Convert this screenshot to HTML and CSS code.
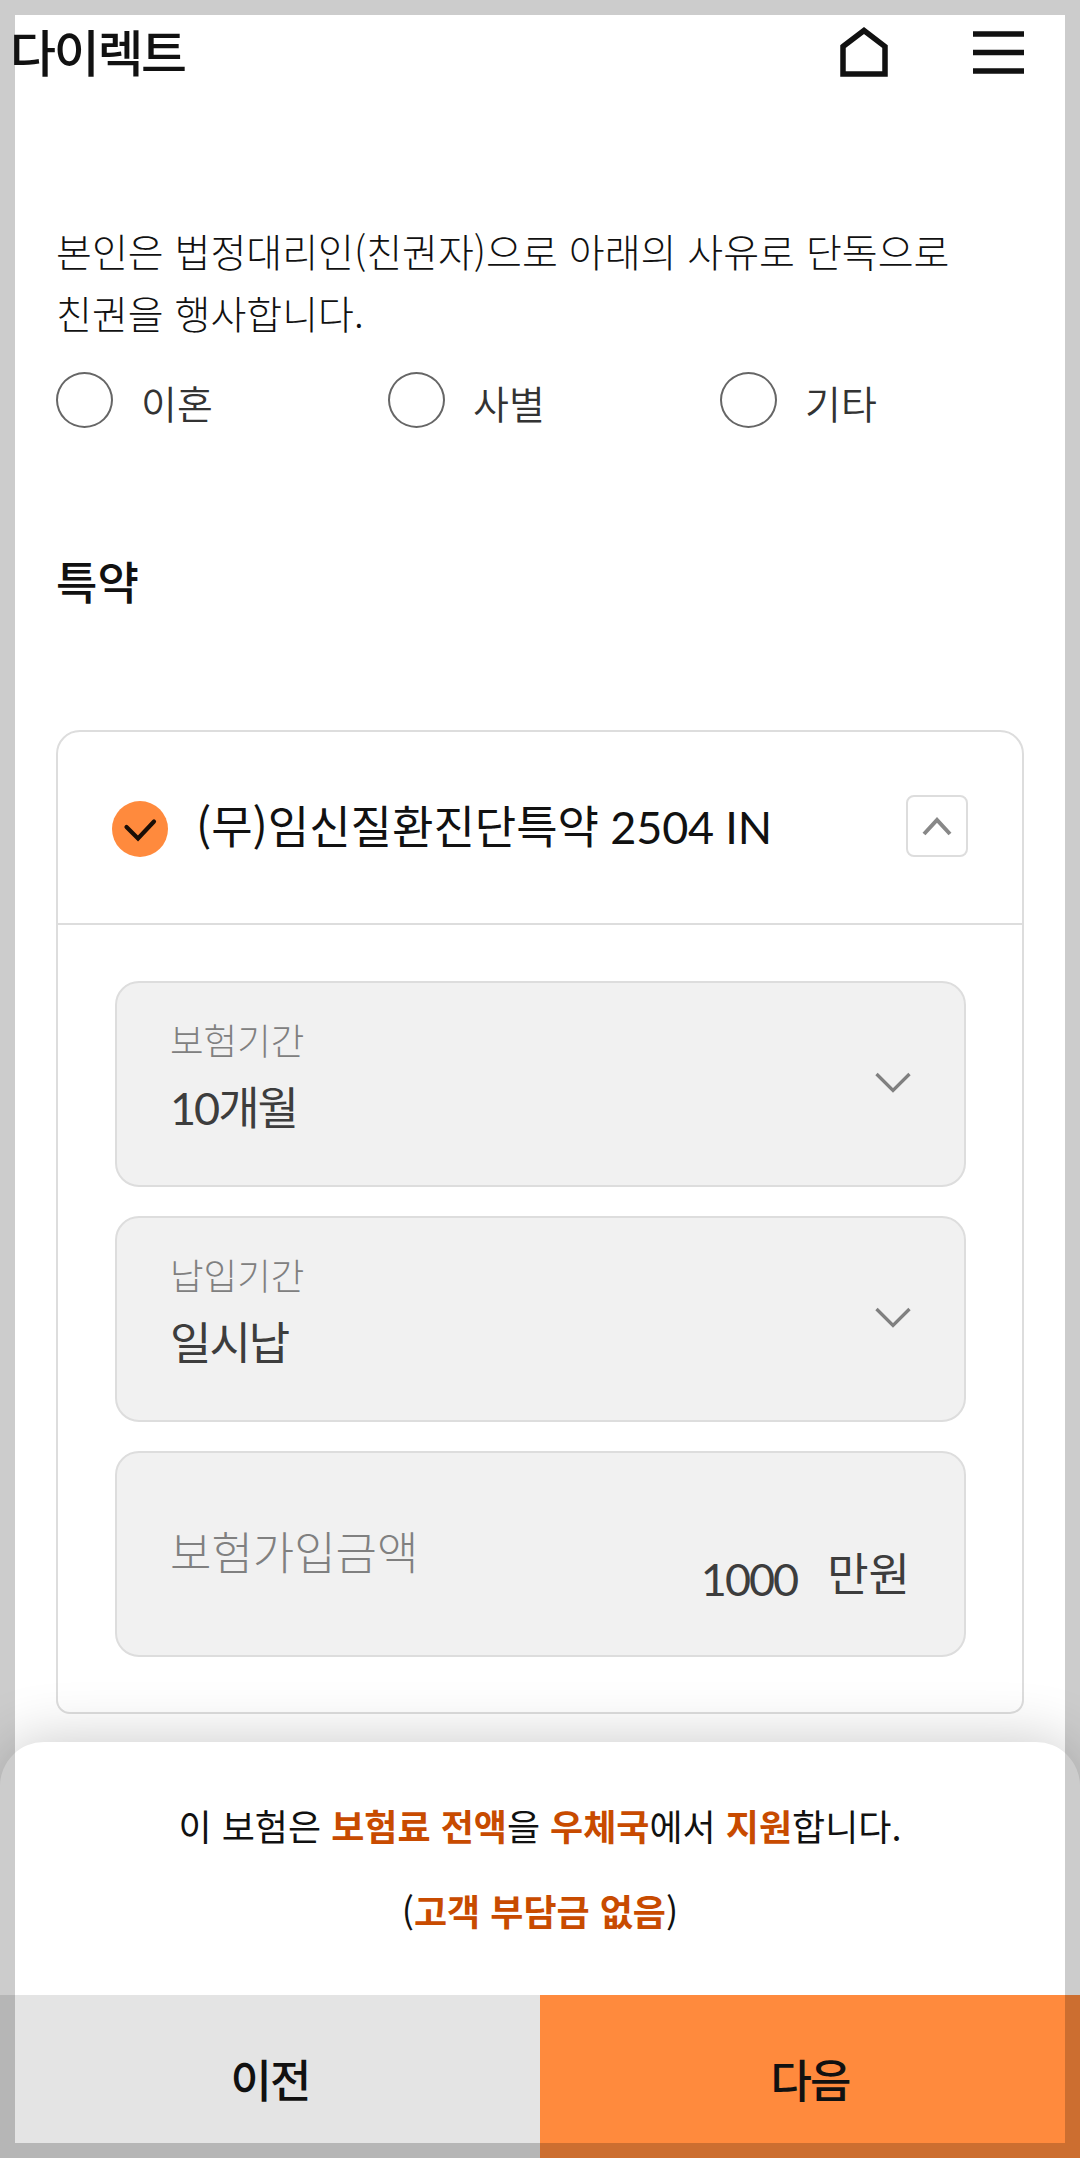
FILE: index.html
```html
<!DOCTYPE html>
<html lang="ko">
<head>
<meta charset="utf-8">
<title>다이렉트</title>
<link rel="stylesheet" href="styles.css">
</head>
<body>
<div class="app">
  <header class="header">
    <div class="logo">다이렉트</div>
    <nav class="nav">
      <svg class="icon-home" width="50" height="52" viewBox="0 0 50 52"><path d="M4 20.500 25 4.500 46 20.500V48H4Z" fill="none" stroke="#111" stroke-width="5.500"/></svg>
      <svg class="icon-menu" width="52" height="52" viewBox="0 0 52 52"><path d="M0 8H51M0 26.500H51M0 45H51" fill="none" stroke="#111" stroke-width="5.500"/></svg>
    </nav>
  </header>
  <main class="main">
    <p class="reason">본인은 법정대리인(친권자)으로 아래의 사유로 단독으로<br>친권을 행사합니다.</p>
    <div class="radios">
      <label class="radio"><span class="circle"></span><span class="radio-text">이혼</span></label>
      <label class="radio"><span class="circle"></span><span class="radio-text">사별</span></label>
      <label class="radio"><span class="circle"></span><span class="radio-text">기타</span></label>
    </div>
    <h2 class="section-title">특약</h2>
    <section class="card">
      <div class="card-head">
        <svg class="check" width="56" height="56" viewBox="0 0 56 56"><circle cx="28" cy="28" r="28" fill="#ff8a3d"/><path d="M14.500 26 26 37.500 42 20.500" fill="none" stroke="#1a0e06" stroke-width="4.200" stroke-linecap="round"/></svg>
        <h3 class="card-title">(무)임신질환진단특약<span class="latin"> 2504 IN</span></h3>
        <button class="toggle" type="button"><svg width="30" height="20" viewBox="0 0 30 20"><path d="M2 18 15 4 28 18" fill="none" stroke="#888" stroke-width="4"/></svg></button>
      </div>
      <div class="card-body">
        <div class="field">
          <div class="field-text"><span class="label">보험기간</span><span class="value">10개월</span></div>
          <svg class="chevron" width="36" height="22" viewBox="0 0 36 22"><path d="M1.500 2 18 18.500 34.500 2" fill="none" stroke="#808080" stroke-width="3.300"/></svg>
        </div>
        <div class="field">
          <div class="field-text"><span class="label">납입기간</span><span class="value">일시납</span></div>
          <svg class="chevron" width="36" height="22" viewBox="0 0 36 22"><path d="M1.500 2 18 18.500 34.500 2" fill="none" stroke="#808080" stroke-width="3.300"/></svg>
        </div>
        <div class="field">
          <span class="amount-label">보험가입금액</span>
          <div class="amount"><span class="amount-num">1000</span><span class="amount-unit">만원</span></div>
        </div>
      </div>
    </section>
  </main>
  <footer class="sheet">
    <div class="notice">
      <p>이 보험은 <b>보험료 전액</b>을 <b>우체국</b>에서 <b>지원</b>합니다.</p>
      <p>(<b>고객 부담금 없음</b>)</p>
    </div>
    <div class="actions">
      <button class="btn prev" type="button">이전</button>
      <button class="btn next" type="button">다음</button>
    </div>
  </footer>
  <div class="frame"></div>
</div>
</body>
</html>
```
FILE: styles.css
```css
* { box-sizing: border-box; margin: 0; padding: 0; }
body { background: #fff; color: #111; font-family: "Noto Sans CJK KR", sans-serif; }
button { border: 0; font: inherit; color: inherit; }
svg { display: block; flex: none; }
.app { position: relative; width: 1080px; height: 2158px; overflow: hidden; display: flex; flex-direction: column; }
.header { height: 105px; flex: none; display: flex; justify-content: space-between; align-items: center; padding: 0 55px 2px 10px; }
.logo { font-size: 50px; font-weight: 500; letter-spacing: -2.300px; line-height: 105px; padding-bottom: 2px; }
.nav { display: flex; gap: 84px; }
.main { flex: none; height: 1637px; padding: 114px 56px 0; }
.reason { font-size: 39px; font-weight: 300; line-height: 62px; }
.radios { display: grid; grid-template-columns: repeat(3, 332px); margin-top: 27px; height: 56px; }
.radio { display: flex; align-items: center; gap: 28px; }
.circle { width: 57px; height: 56px; border: 2px solid #666; border-radius: 50%; }
.radio-text { color: #333; font-size: 39px; font-weight: 350; line-height: 56px; padding-top: 4px; }
.section-title { margin-top: 122px; height: 66px; line-height: 66px; font-size: 45px; font-weight: 500; }
.card { margin-top: 116px; height: 984px; border: 2px solid #ddd; border-radius: 24px 24px 14px 14px; }
.card-head { height: 193px; border-bottom: 2px solid #ddd; display: flex; align-items: center; padding: 0 54px; }
.check { margin-top: 2px; }
.card-title { flex: 1; margin-left: 28px; padding-bottom: 4px; font-size: 45px; font-weight: 400; line-height: 66px; }
.latin { font-family: Lato, sans-serif; letter-spacing: -0.200px; }
.toggle { width: 62px; height: 62px; border: 2px solid #ddd; border-radius: 8px; background: #fff; display: flex; align-items: center; justify-content: center; margin-top: -4px; }
.card-body { display: flex; flex-direction: column; gap: 29px; padding: 56px 56px 0 57px; }
.field { height: 206px; border: 2px solid #ddd; border-radius: 24px; background: #f1f1f1; display: flex; justify-content: space-between; align-items: center; padding: 0 53px; }
.field-text { display: flex; flex-direction: column; padding-bottom: 11px; }
.chevron { margin-top: -2px; }
.label { color: #808080; font-size: 36.500px; font-weight: 300; line-height: 59px; }
.value { color: #3d3d3d; font-family: Lato, "Noto Sans CJK KR", sans-serif; font-size: 45px; letter-spacing: -2px; line-height: 78px; }
.amount-label { color: #808080; font-size: 45px; font-weight: 300; line-height: 66px; padding-bottom: 6px; }
.amount { display: flex; gap: 30px; color: #3d3d3d; font-size: 45px; padding-top: 43px; line-height: 66px; }
.amount-num { font-family: Lato, sans-serif; letter-spacing: -2px; padding-top: 7px; }
.amount-unit { padding-right: 1px; }
.sheet { position: relative; flex: none; height: 416px; background: #fff; border-radius: 44px 44px 0 0; box-shadow: 0 0 60px rgba(0, 0, 0, 0.220); }
.notice { height: 253px; padding-top: 41px; text-align: center; font-size: 36px; line-height: 85px; }
.notice b { color: #c84b00; font-weight: 700; }
.actions { display: flex; height: 163px; }
.btn { flex: 1; font-size: 45px; font-weight: 500; letter-spacing: -2px; padding-top: 4px; }
.prev { background: #e4e4e4; }
.next { background: #ff8a3d; }
/* translucent border laid over the whole screen */
.frame { position: absolute; inset: 0; border: 15px solid rgba(0, 0, 0, 0.200); pointer-events: none; }
```
